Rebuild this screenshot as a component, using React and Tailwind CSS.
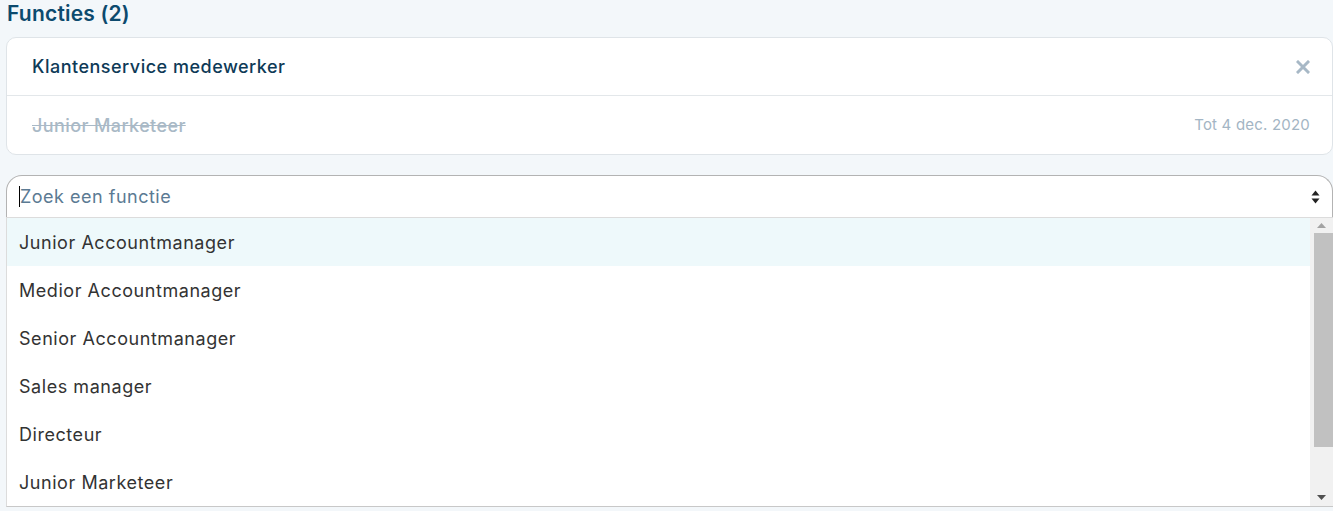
import React from "react";

const options = [
  "Junior Accountmanager",
  "Medior Accountmanager",
  "Senior Accountmanager",
  "Sales manager",
  "Directeur",
  "Junior Marketeer",
];

export default function App() {
  return (
    <div className="w-[1333px] h-[511px] overflow-hidden bg-[#f3f7fa] pl-[6px] font-['Inter',sans-serif]">
      <h2 className="h-[28px] leading-[28px] text-[21px] font-semibold text-[#0c4a6e] pl-[1px] tracking-[0.2px]">
        Functies (2)
      </h2>
      <div className="mt-[9px] w-[1327px] bg-white border border-[#dfe4e8] rounded-[10px]">
        <div className="h-[58px] flex items-center justify-between pl-[25px] pr-[22px] border-b border-[#e3e7ea]">
          <span className="text-[18px] font-medium text-[#0e3a57] tracking-[0.5px]">Klantenservice medewerker</span>
          <svg width="14" height="14" viewBox="0 0 14 14" className="text-[#a7b8c6]">
            <path d="M2 2 L12 12 M12 2 L2 12" stroke="currentColor" strokeWidth="3" strokeLinecap="square" />
          </svg>
        </div>
        <div className="h-[58px] flex items-center justify-between pl-[25px] pr-[22px]">
          <span className="text-[18px] font-medium text-[#a9b9c6] line-through tracking-[0.4px]">Junior Marketeer</span>
          <span className="text-[15px] text-[#a3b5c4] tracking-[0.2px]">Tot 4 dec. 2020</span>
        </div>
      </div>
      <div className="mt-[20px] w-[1327px]">
        <div className="h-[42px] bg-white border border-b-0 border-[#b3b3b3] rounded-t-[16px] flex items-center justify-between pl-[12px] pr-[12px]">
          <div className="flex items-center">
            <span className="w-[1px] h-[21px] bg-black"></span>
            <span className="text-[18px] text-[#5b7a93] tracking-[0.5px]">Zoek een functie</span>
          </div>
          <svg width="9" height="14" viewBox="0 0 9 14">
            <path d="M4.5 0.5 L8.5 5.5 L0.5 5.5 Z" fill="#222" />
            <path d="M4.5 13.5 L8.5 8.5 L0.5 8.5 Z" fill="#222" />
          </svg>
        </div>
        <div className="flex bg-white border-t border-l border-b border-[#dcdcdc] border-b-[#c8c8c8] h-[290px]">
          <div className="flex-1 overflow-hidden">
            {options.map((o, i) => (
              <div
                key={o}
                className={
                  "h-[48px] flex items-center pl-[12px] text-[18px] text-[#333] tracking-[0.55px] " +
                  (i === 0 ? "bg-[#eef9fb]" : "bg-white")
                }
              >
                {o}
              </div>
            ))}
          </div>
          <div className="w-[23px] bg-[#f1f1f1] flex flex-col items-center">
            <div className="h-[15px] w-full flex items-center justify-center">
              <svg width="9" height="5" viewBox="0 0 9 5"><path d="M4.5 0 L9 5 L0 5 Z" fill="#a3a3a3" /></svg>
            </div>
            <div className="w-[19px] h-[214px] bg-[#c1c1c1] self-end"></div>
            <div className="flex-1"></div>
            <div className="h-[17px] w-full flex items-center justify-center">
              <svg width="9" height="5" viewBox="0 0 9 5"><path d="M0 0 L9 0 L4.5 5 Z" fill="#505050" /></svg>
            </div>
          </div>
        </div>
      </div>
    </div>
  );
}
